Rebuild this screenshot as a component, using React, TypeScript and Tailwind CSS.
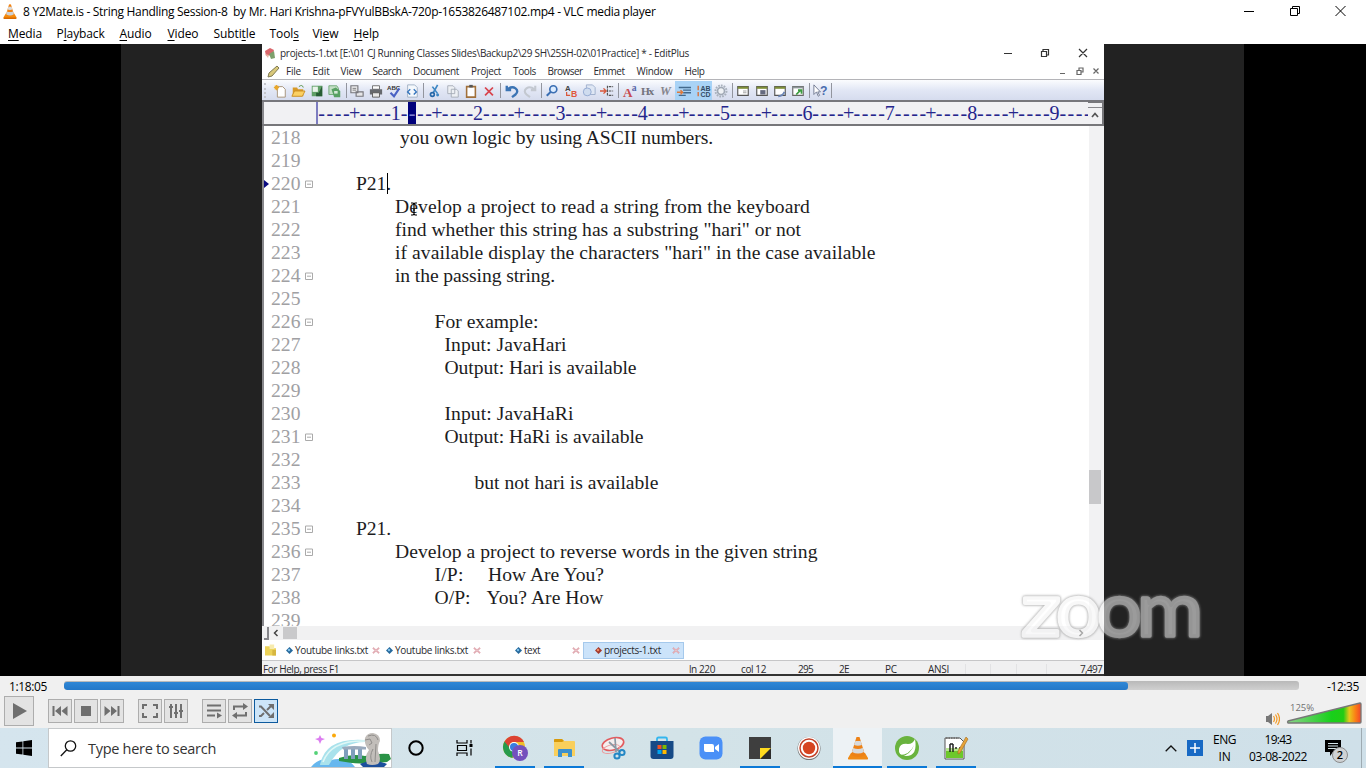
import React, { useLayoutEffect, useRef, useState } from "react";

type FitProps = { w: number; children: string; className?: string };

/* Spreads a label over a fixed width by adjusting its letter spacing. */
function Fit({ w, children, className = "" }: FitProps) {
  const ref = useRef<HTMLSpanElement>(null);
  const [gap, setGap] = useState(0);
  useLayoutEffect(() => {
    if (ref.current) {
      const natural = ref.current.getBoundingClientRect().width;
      setGap((w - natural) / children.length);
    }
  }, [w, children]);
  return (
    <span ref={ref} className={`inline-block shrink-0 whitespace-pre ${className}`} style={{ letterSpacing: `${gap}px` }}>
      {children}
    </span>
  );
}

function Cone({ className = "" }: { className?: string }) {
  return (
    <svg viewBox="0 0 20 22" className={className}>
      <path d="M4 14 L1 19 Q0 21.5 2 21.5 H18 Q20 21.5 19 19 L16 14 Z" fill="#f58a0b" />
      <path d="M1 19.5h18l.3 1.5q-.5.7-1.3.7H2q-1 0-1.3-.7z" fill="#d86a00" />
      <path d="M8.6 1 Q10 0 11.4 1 L15.6 15 Q10 19 4.4 15 Z" fill="#f28210" />
      <path d="M7.7 4.2h4.6l1.1 3.8q-3.4 1.4-6.8 0z" fill="#d9dcdf" />
      <path d="M5.7 11q4.3 1.7 8.6 0l1.2 4q-5.5 3.4-11 0z" fill="#cdd1d5" />
    </svg>
  );
}

const vlcMenu = [
  { l: "Media", k: 0, w: 33, m: 15.5 },
  { l: "Playback", k: 1, w: 47, m: 16 },
  { l: "Audio", k: 0, w: 32, m: 16 },
  { l: "Video", k: 0, w: 30, m: 16 },
  { l: "Subtitle", k: 5, w: 40, m: 16 },
  { l: "Tools", k: 4, w: 27, m: 16 },
  { l: "View", k: 2, w: 25, m: 16 },
  { l: "Help", k: 0, w: 26, m: 0 },
];

const vlcText = "font-['Open_Sans',sans-serif] text-[12px] text-black";

function VlcHeader() {
  return (
    <header className="h-11 shrink-0 bg-white">
      <div className="flex h-[22px] items-center pl-[3px]">
        <Cone className="h-[17px] w-[14px]" />
        <Fit w={632.5} className={`ml-[6px] mt-[2px] ${vlcText}`}>
          8 Y2Mate.is - String Handling Session-8  by Mr. Hari Krishna-pFVYulBBskA-720p-1653826487102.mp4 - VLC media player
        </Fit>
        <svg viewBox="0 0 110 12" className="ml-auto mr-[16px] h-3 w-[110px]" fill="none" stroke="#000" strokeWidth="1">
          <path d="M4 6.500h10M50.500 3.500h7v7h-7zM52.500 3.500v-2h7v7h-2M95.500 1l10 10M105.500 1l-10 10" />
        </svg>
      </div>
      <nav className="flex h-[22px] items-center pl-2 pt-[2px]">
        {vlcMenu.map((m) => (
          <MenuWord key={m.l} {...m} />
        ))}
      </nav>
    </header>
  );
}

function MenuWord({ l, k, w, m }: { l: string; k: number; w: number; m: number }) {
  return (
    <span className={`flex shrink-0 leading-[20px] tracking-[-0.1px] ${vlcText}`} style={{ width: w + m }}>
      <span>{l.slice(0, k)}</span>
      <span className="underline underline-offset-2">{l[k]}</span>
      <span>{l.slice(k + 1)}</span>
    </span>
  );
}

const epMenu: [string, number, number][] = [
  ["File", 15, 11.5], ["Edit", 17, 11], ["View", 21, 11], ["Search", 29, 11.5], ["Document", 46, 12], ["Project", 30, 12],
  ["Tools", 23, 11.5], ["Browser", 35, 11], ["Emmet", 31, 12], ["Window", 36, 12], ["Help", 20, 0],
];

const icons: Record<string, React.ReactNode> = {
  new: <><path d="M5 3h6l3 3v9H5z" fill="#fff" stroke="#a08c70" /><path d="M4 1v6M1 4h6M2 2l4 4M6 2L2 6" stroke="#e8a72c" strokeWidth="1.3" /></>,
  open: <><path d="M2 4h5l1 2h6v8H2z" fill="#d89a28" /><path d="M1 14l3-6h12l-3 6z" fill="#fbd063" stroke="#c88a20" /><path d="M9 3q4-3 5 1" stroke="#4b8a3a" fill="none" /></>,
  save: <><path d="M2 2h12v12H2z" fill="#5f9f66" /><path d="M3 3h6v6H3z" fill="#e8f3ea" /><path d="M14 2v12H7v-4h3z" fill="#275c34" /></>,
  saveall: <><path d="M1 2h9l2 3v7H1z" fill="#c3dfc5" stroke="#6da673" /><path d="M4 6l5-2 5 4v7H7z" fill="#58a163" /><path d="M7 8h4v3H7z" fill="#d5e9d7" /></>,
  ftp: <><path d="M1 2h8v8H1zM7 9h8v5H7z" fill="#e6e6e8" stroke="#77777c" strokeWidth="1.3" /><path d="M3 5h4M3 7h4" stroke="#777" /></>,
  print: <><path d="M4 2h8v4H4z" fill="#fff" stroke="#666" /><path d="M1 6h14v6H1z" fill="#66696e" /><path d="M4 10h8v5H4z" fill="#e9e9e9" stroke="#555" /></>,
  spell: <><text x="0" y="6.500" fontSize="7" fontWeight="700" fill="#333" fontFamily="Liberation Sans">ABC</text><path d="M4 10l4 4 6-9" fill="none" stroke="#4a62c4" strokeWidth="2.400" /></>,
  code: <><path d="M3 1h8l3 3v11H3z" fill="#f4f8fc" stroke="#9badc0" /><path d="M6 6L3 9l3 3M10 6l3 3-3 3" fill="none" stroke="#3474bd" strokeWidth="1.600" /></>,
  cut: <><path d="M11 1L6 10M5 3l6 8" stroke="#3e87c4" strokeWidth="1.900" /><circle cx="5" cy="12" r="2.200" fill="none" stroke="#2667a8" strokeWidth="1.900" /><circle cx="11" cy="12.500" r="1.700" fill="#3e87c4" /></>,
  copy: <path d="M2 2h6l2 2v7H2zM6 6h6l2 2v7H6z" fill="#edf0f4" stroke="#a3aab5" />,
  paste: <><path d="M3 3h10v12H3z" fill="#fdfdfd" stroke="#a1703a" strokeWidth="1.800" /><path d="M6 1h4v3H6z" fill="#555" /></>,
  del: <path d="M3.500 4l9 9M12.500 4l-9 9" stroke="#d8434c" strokeWidth="2" />,
  undo: <path d="M2 2v5h5M3 6q5-4 9-1t0 7l-4 3" fill="none" stroke="#3b74b4" strokeWidth="2.700" />,
  redo: <path d="M14 2v5H9M13 6Q8 2 4 5t0 7l4 3" fill="none" stroke="#c3c8d0" strokeWidth="2.400" />,
  find: <><circle cx="9.500" cy="6" r="4" fill="#dcecff" stroke="#3b6fb3" strokeWidth="1.900" /><path d="M6.500 9L2 13.500" stroke="#3b6fb3" strokeWidth="2.400" /></>,
  replace: <><text x="1" y="8" fontSize="9" fontWeight="700" fill="#444" fontFamily="Liberation Sans">A</text><text x="8" y="15" fontSize="10" fontWeight="700" fill="#e0583c" fontFamily="Liberation Sans">B</text><path d="M3 9v4h4" fill="none" stroke="#d8583c" strokeWidth="1.400" /></>,
  findfiles: <><path d="M5 1h7l3 3v8H5z" fill="#dfe7f4" stroke="#9aabc9" /><circle cx="6" cy="9" r="4.500" fill="#cfdcef" stroke="#8fa6cf" /></>,
  goto: <><path d="M0 8h6M4 5L7 8l-3 3" stroke="#d8583c" fill="none" strokeWidth="1.600" /><path d="M10 3h5M10 8h5M10 13h5M8.500 2v12" stroke="#555" strokeWidth="1.300" strokeDasharray="3 1" /></>,
  font: <><text x="0" y="15" fontSize="15" fontWeight="700" fill="#c74a50" fontFamily="Liberation Serif">A</text><text x="10" y="8" fontSize="11" fontWeight="700" fill="#5966a8" fontFamily="Liberation Serif">a</text></>,
  hx: <text x="0" y="13" fontSize="13" fontWeight="700" fill="#73737c" fontFamily="Liberation Serif" textLength="15">Hx</text>,
  w: <text x="1" y="13" fontSize="14" fontWeight="700" fontStyle="italic" fill="#85858d" fontFamily="Liberation Serif">W</text>,
  wrap: <><path d="M2 4h14M7 7h9M7 10h9M2 13h8" stroke="#436a8d" strokeWidth="1.600" /><path d="M0 9.500h6M4 7l2.500 2.500L4 12" stroke="#e07a3a" fill="none" strokeWidth="1.600" /></>,
  nums: <><text x="5" y="7.500" fontSize="8" fontWeight="700" fill="#334c66" fontFamily="Liberation Sans">AB</text><text x="5" y="15" fontSize="8" fontWeight="700" fill="#334c66" fontFamily="Liberation Sans">CD</text><path d="M2.500 2v5M2.500 9v5" stroke="#d8723c" strokeWidth="1.600" /></>,
  gear: <><circle cx="8" cy="8" r="6.300" fill="none" stroke="#a9b1bc" strokeWidth="2.200" strokeDasharray="2 1.200" /><circle cx="8" cy="8" r="4" fill="#eef1f5" stroke="#a0a9b5" strokeWidth="1.900" /></>,
  win1: <><path d="M2 3h12v10H2z" fill="#fff" stroke="#555" strokeWidth="1.300" /><path d="M2 3h12v2.500H2z" fill="#7e8f3a" /><path d="M8 8h4M8 10h4" stroke="#999" /></>,
  win2: <><path d="M2 3h12v10H2z" fill="#fff" stroke="#555" strokeWidth="1.300" /><path d="M2 3h12v2.500H2z" fill="#7e8f3a" /><path d="M6 7h6v5H6z" fill="#666b80" /></>,
  win3: <><path d="M2 3h12v10H2z" fill="#fff" stroke="#555" strokeWidth="1.300" /><path d="M2 3h12v2.500H2z" fill="#7e8f3a" /><path d="M6 14q5 0 7-5" stroke="#6b85b5" strokeWidth="2" fill="none" /></>,
  win4: <><path d="M2 3h12v10H2z" fill="#fff" stroke="#666" strokeWidth="1.300" /><path d="M2 3h12v2H2z" fill="#8c9699" /><path d="M6 12l5-5M8 7h4v4" stroke="#3a9c3f" strokeWidth="2" fill="none" /></>,
  help: <><path d="M1 1v11l3-3 2 5 1.500-1-2-4h3z" fill="#fff" stroke="#69728c" /><text x="8" y="13" fontSize="14" fontWeight="700" fill="#496caf" fontFamily="Liberation Sans">?</text></>,
};

const toolGroups = [
  ["new", "open", "save", "saveall"],
  ["ftp", "print", "spell", "code"],
  ["cut", "copy", "paste", "del"],
  ["undo", "redo"],
  ["find", "replace", "findfiles", "goto"],
  ["font", "hx", "w", "wrap", "nums", "gear"],
  ["win1", "win2", "win3", "win4"],
  ["help"],
];

function Toolbar() {
  return (
    <div className="flex h-[22px] items-center border-b-2 border-[#77777c] bg-linear-to-b from-[#fbfcfe] via-[#e2e7f5] to-[#d6dcee] pl-[2px]">
      <span className="mr-[5px] h-[15px] w-0 border-l-2 border-dotted border-[#c3c5cc]" />
      {toolGroups.map((g, i) => (
        <div key={i} className="flex items-center">
          {g.map((n) => (
            <span
              key={n}
              className={`flex w-[18.250px] items-center justify-center ${n === "wrap" || n === "nums" ? "h-[19px] bg-[#a9d3f6]" : "h-[18px]"}`}
            >
              <svg viewBox="0 0 16 16" className="mt-px h-[14px] w-[14px] overflow-visible">{icons[n]}</svg>
            </span>
          ))}
          <span className="mx-[1.600px] h-[15px] w-px bg-[#92959e]" />
        </div>
      ))}
    </div>
  );
}

function Ruler() {
  const cells = Array.from({ length: 94 }, (_, i) => (i % 10 === 9 ? String((i + 1) / 10) : i % 10 === 4 ? "+" : "-"));
  return (
    <div className="flex h-6 shrink-0 border-b-2 border-[#77777a] bg-[#f1f1f3]">
      <div className="w-[54px] shrink-0 border-l-2 border-[#88888c]" />
      <div className="flex w-[772px] shrink-0 overflow-hidden border-l-2 border-[#7d7dc0] font-['Liberation_Serif',serif] text-[20px] leading-[22px] text-[#25258c]">
        {cells.map((c, i) => (
          <span key={i} className={`flex w-[8.240px] shrink-0 justify-center ${i === 11 ? "bg-[#00007b] text-[#8080d0]" : ""} ${i === 0 ? "-ml-[0.5px]" : ""}`}>
            {c}
          </span>
        ))}
      </div>
      <div className="flex flex-1 flex-col items-center border-t border-r-2 border-[#77777a]">
        <span className="h-[5px] w-full border-b border-[#88888c]" />
        <svg viewBox="0 0 8 6" className="mt-[4px] h-[6px] w-[8px]"><path d="M1 5l3-3.500L7 5" fill="none" stroke="#555" strokeWidth="1.700" /></svg>
      </div>
    </div>
  );
}

type Line = { n: number; fold?: boolean; parts?: [number, number, string][] };
/* parts: indent from the previous part, width, text */
const lines: Line[] = [
  { n: 218, parts: [[84, 313, "you own logic by using ASCII numbers."]] },
  { n: 219 },
  { n: 220, fold: true, parts: [[40, 35, "P21."]] },
  { n: 221, parts: [[79, 415, "Develop a project to read a string from the keyboard"]] },
  { n: 222, parts: [[79, 406, 'find whether this string has a substring "hari" or not']] },
  { n: 223, parts: [[79, 480.5, 'if available display the characters "hari" in the case available']] },
  { n: 224, fold: true, parts: [[79, 160, "in the passing string."]] },
  { n: 225 },
  { n: 226, fold: true, parts: [[118.5, 104, "For example:"]] },
  { n: 227, parts: [[128.5, 122, "Input: JavaHari"]] },
  { n: 228, parts: [[128.5, 192, "Output: Hari is available"]] },
  { n: 229 },
  { n: 230, parts: [[128.5, 129, "Input: JavaHaRi"]] },
  { n: 231, fold: true, parts: [[128.5, 199, "Output: HaRi is available"]] },
  { n: 232 },
  { n: 233, parts: [[158.5, 184, "but not hari is available"]] },
  { n: 234 },
  { n: 235, fold: true, parts: [[40, 35, "P21."]] },
  { n: 236, fold: true, parts: [[79, 422.5, "Develop a project to reverse words in the given string"]] },
  { n: 237, parts: [[118.5, 29, "I/P:"], [24.5, 116, "How Are You?"]] },
  { n: 238, parts: [[118.5, 36, "O/P:"], [16, 117, "You? Are How"]] },
  { n: 239 },
];

function Editor() {
  return (
    <div className="relative flex h-[500px] shrink-0 bg-white">
      <div className="min-w-0 flex-1 overflow-hidden border-l-2 border-[#88888c] font-['Liberation_Serif',serif] text-[19.600px]">
        {lines.map((l) => (
          <div key={l.n} className="flex h-[23px] items-center leading-[24px] text-[#1c1c22]">
            <span className="flex w-[7px] shrink-0">
              {l.n === 220 && <svg viewBox="0 0 5 8" className="h-2 w-[5px]"><path d="M0 0l5 4-5 4z" fill="#0a0a80" /></svg>}
            </span>
            <Fit w={29.5} className="text-[#a0a0a3]">{String(l.n)}</Fit>
            <span className="flex w-[15px] shrink-0 justify-center">
              {l.fold && <svg viewBox="0 0 8 8" className="ml-px h-2 w-2"><path d="M.5 1h7v6.500h-7zM2 4.200h4" fill="none" stroke="#aaa" /></svg>}
            </span>
            {l.parts?.map(([x, w, t], i) => (
              <span key={i} className="flex shrink-0" style={{ marginLeft: i === 0 ? x + 0.5 : x }}>
                <Fit w={w}>{t}</Fit>
              </span>
            ))}
          </div>
        ))}
      </div>
      <div className="flex w-[15px] shrink-0 flex-col bg-[#f2f2f3] pt-[344px]">
        <span className="h-[34px] w-3 bg-[#c8c8ca]" />
      </div>
      <span className="absolute left-[125px] top-[47px] h-[21px] w-px bg-black" />
      <svg viewBox="0 0 8 14" className="absolute left-[148px] top-[76px] h-[14px] w-2"><path d="M1 1h2l1 1 1-1h2M4 2v10M1 13h2l1-1 1 1h2M3 8h2" fill="none" stroke="#000" strokeWidth="1.200" /></svg>
    </div>
  );
}

const epText = "font-['Open_Sans',sans-serif] text-[10px] leading-[13px] text-[#2a2a2e]";

function Diamond({ red }: { red?: boolean }) {
  return (
    <svg viewBox="0 0 7 7" className="h-[7px] w-[7px] shrink-0">
      <path d="M3.500 0L7 3.500 3.500 7 0 3.500z" fill={red ? "#a33b2e" : "#27699c"} />
      <circle cx="3" cy="3" r="1.200" fill={red ? "#f08a62" : "#7cc0ea"} />
    </svg>
  );
}

function TabClose() {
  return <svg viewBox="0 0 8 8" className="ml-auto h-[7px] w-2 shrink-0"><path d="M.5 1l7 6M7.500 1l-7 6" stroke="#d8909a" strokeWidth="2" /><path d="M1 1l6 6M7 1L1 7" stroke="#fff" strokeWidth=".6" /></svg>;
}

function Tab({ name, w, text, pad, active }: { name: string; w: number; text: number; pad: number; active?: boolean }) {
  return (
    <div
      className={`flex h-[17px] shrink-0 items-center pr-[3px] ${active ? "border border-[#a5c9ec] bg-[#cbe3fa]" : ""}`}
      style={{ width: w, paddingLeft: pad }}
    >
      <Diamond red={active} />
      <Fit w={text} className={`ml-[2px] ${epText}`}>{name}</Fit>
      <TabClose />
    </div>
  );
}

function Status({ w, t, text }: { w: number; t: string; text: number }) {
  return <span className="flex shrink-0" style={{ width: w }}><Fit w={text} className={epText}>{t}</Fit></span>;
}

function EditPlus() {
  return (
    <div className="ml-[141px] flex h-[632px] w-[842px] shrink-0 flex-col border-b-2 border-[#333] bg-white">
      <div className="flex h-[18px] shrink-0 items-center pl-[2px]">
        <svg viewBox="0 0 12 12" className="h-3 w-3"><path d="M1 4l5-3 4 2-2 5-6 1z" fill="#d9666b" /><path d="M5 7l5-3 1 7-4 1z" fill="#7da06c" /><path d="M1 7l4 1-1 3z" fill="#e9b7a8" /></svg>
        <Fit w={409} className={`ml-[4px] ${epText}`}>{"projects-1.txt [E:\\01 CJ Running Classes Slides\\Backup2\\29 SH\\25SH-02\\01Practice] * - EditPlus"}</Fit>
        <svg viewBox="0 0 84 10" className="ml-auto mr-[16px] h-[10px] w-[84px]" fill="none" stroke="#333" strokeWidth="1.200">
          <path d="M0 5.500h8M37.500 3.500h5v5h-5zM39 3v-1.500h5.500V7H43M75 1l8 8M83 1l-8 8" />
        </svg>
      </div>
      <div className="flex h-[17px] shrink-0 items-center pl-[5px] pt-px">
        <svg viewBox="0 0 13 13" className="h-[13px] w-[13px]"><path d="M1 12l1-4L10 1l2 2-7 8z" fill="#d9c87a" stroke="#807a52" /></svg>
        <div className="ml-[6px] flex">
          {epMenu.map(([t, w, m]) => (
            <Status key={t} t={t} w={w + m} text={w} />
          ))}
        </div>
        <svg viewBox="0 0 40 8" className="ml-auto mr-[4px] h-2 w-10" fill="none" stroke="#666" strokeWidth="1.200">
          <path d="M0 6.500h5M17 3.500h4v4h-4zM19 3V1h4v4h-2M33.500 1.500l5 5M38.500 1.500l-5 5" />
        </svg>
      </div>
      <div className="shrink-0 border-t border-[#b4b4b8]"><Toolbar /></div>
      <Ruler />
      <Editor />
      <div className="flex h-[14px] shrink-0 items-center bg-[#f1f1f2] pl-[2px]">
        <span className="h-[13px] w-[5px] border-r-2 border-b-2 border-[#88888c]" />
        <svg viewBox="0 0 6 8" className="ml-[4px] h-2 w-[6px]"><path d="M4.500 1l-3 3 3 3" fill="none" stroke="#444" strokeWidth="1.500" /></svg>
        <span className="ml-[4px] h-3 w-[14px] bg-[#c9c9cb]" />
        <svg viewBox="0 0 6 8" className="ml-auto mr-[20px] h-2 w-[6px]"><path d="M1.500 1l3 3-3 3" fill="none" stroke="#444" strokeWidth="1.500" /></svg>
      </div>
      <div className="flex h-[21px] shrink-0 items-center border-b border-[#c6c6c8] pl-[3px]">
        <svg viewBox="0 0 12 12" className="h-3 w-[11px]"><path d="M0 2h5l1 2h6v8H0z" fill="#ecd258" /><path d="M5 0h5v5H5z" fill="#f7ebae" /><path d="M8 6h4v6H8z" fill="#d6b640" /></svg>
        <div className="ml-[7px] flex">
          <Tab name="Youtube links.txt" w={100} text={73} pad={3} />
          <Tab name="Youtube links.txt" w={101} text={73} pad={3} />
          <Tab name="text" w={99} text={16} pad={31} />
          <Tab name="projects-1.txt" w={101} text={57} pad={11} active />
        </div>
      </div>
      <div className="flex min-h-0 flex-1 items-center overflow-hidden bg-[#f0f0f1] pl-[1px] pt-[3px]">
        <Status t="For Help, press F1" w={426} text={76} />
        <Status t="ln 220" w={52} text={26} />
        <Status t="col 12" w={57} text={25} />
        <Status t="295" w={41} text={15} />
        <Status t="2E" w={46} text={10} />
        <Status t="PC" w={43} text={12} />
        <Status t="ANSI" w={27} text={21} />
        <span className="ml-[10px] h-[11px] w-[26px] border-x border-[#e2e2e4]" />
        <span className="h-[11px] w-[26px] border-r border-[#e2e2e4]" />
        <span className="h-[11px] w-[30px] border-r border-[#e2e2e4]" />
        <span className="ml-auto flex pr-[2px]"><Fit w={22} className={epText}>7,497</Fit></span>
      </div>
    </div>
  );
}

function Watermark() {
  const letters: [string, number, number][] = [["z", 0, 40], ["o", 35, 45], ["o", 76, 45], ["m", 116, 66]];
  return (
    <svg viewBox="0 0 182 60" className="absolute left-[1021px] top-[548px] h-[60px] w-[182px] opacity-55 drop-shadow-[0_0_1px_#8a8a8a]">
      {letters.map(([c, x, w], i) => (
        <text key={i} x={x} y="44" fontSize="76" fontWeight="400" fontFamily="Lato, sans-serif" textLength={w} lengthAdjust="spacingAndGlyphs" fill="#fff" stroke="#f4f4f4" strokeWidth="3.400" strokeLinejoin="round" className="drop-shadow-[0_0_1px_#8a8a8a]">
          {c}
        </text>
      ))}
    </svg>
  );
}

function Ctl({ children, active, gap = "" }: { children: React.ReactNode; active?: boolean; gap?: string }) {
  return (
    <button className={`flex h-6 w-6 shrink-0 items-center justify-center border ${gap} ${active ? "border-[#0c5a9e] bg-[#cde5f8]" : "border-[#adadad] bg-[#e3e3e3]"}`}>
      <svg viewBox="0 0 18 18" className="h-[18px] w-[18px]" fill="#6f6f6f" stroke="none">{children}</svg>
    </button>
  );
}

function Controls() {
  const s = { fill: "none", stroke: "#6f6f6f", strokeWidth: 2 };
  return (
    <section className="flex h-[52px] shrink-0 flex-col bg-[#f0f0f0]">
      <div className="flex h-[18px] items-center pl-[9px] pr-[6px]">
        <Fit w={38} className={`mt-[3px] ${vlcText}`}>1:18:05</Fit>
        <div className="ml-[17px] h-[9px] w-[1235px] overflow-hidden rounded-[3px] bg-linear-to-b from-[#b9b9b9] to-[#d0d0d0]">
          <div className="mt-px h-2 w-[1064px] rounded-[3px] bg-linear-to-b from-[#2f87d6] to-[#2478c8]" />
        </div>
        <span className="ml-auto mt-[3px] flex pr-px"><Fit w={32} className={vlcText}>-12:35</Fit></span>
      </div>
      <div className="flex h-[34px] items-center pl-1">
        <button className="flex h-[30px] w-[30px] items-center justify-center border border-[#adadad] bg-[#e3e3e3]">
          <svg viewBox="0 0 14 16" className="ml-px h-4 w-[14px]"><path d="M0 0l14 8-14 8z" fill="#6f6f6f" /></svg>
        </button>
        <div className="flex gap-[2px] pl-[14px]">
          <Ctl><path d="M1.500 4h2v10h-2zM10 4v10L4 9zM16.500 4v10l-6-5z" /></Ctl>
          <Ctl><path d="M4 4h10v10H4z" /></Ctl>
          <Ctl><path d="M14.500 4h2v10h-2zM8 4v10l6-5zM1.500 4v10l6-5z" /></Ctl>
          <Ctl gap="ml-3"><path d="M6 3H2v4M12 3h4v4M6 15H2v-4M12 15h4v-4" {...s} /></Ctl>
          <Ctl><path d="M4 2v14M9 2v14M14 2v14M2 5h4M7 11h4M12 9h4" {...s} /></Ctl>
          <Ctl gap="ml-3"><path d="M2 3.500h14M2 8.500h14M2 13.500h8" {...s} /><path d="M12 10.500l5 3-5 3z" /></Ctl>
          <Ctl><path d="M3 8V4.500h11M15 10v3.500H4" {...s} /><path d="M12 1l5 3.500L12 8zM6 10l-5 3.500L6 17z" /></Ctl>
          <Ctl active><path d="M2 4.500h2L13 14M2 14h2l3-3M10 8l4-4" {...s} /><path d="M11 2h6v6zM11 16h6v-6z" /></Ctl>
        </div>
        <svg viewBox="0 0 14 14" className="ml-auto mt-[16px] h-[14px] w-[14px]"><path d="M0 4h2l4-3v12l-4-3H0z" fill="#777" /><path d="M7.500 4q2 3 0 6M9.500 2.500q3 4.500 0 9M11.500 1q4 6 0 12" fill="none" stroke="#f39a24" strokeWidth="1.200" /></svg>
        <svg viewBox="0 0 76 26" className="ml-[6px] mr-[4px] mt-[1px] h-[26px] w-[76px]">
          <defs>
            <linearGradient id="vol"><stop stopColor="#8bd28a" /><stop offset=".6" stopColor="#18d01b" /><stop offset=".76" stopColor="#22cc14" /><stop offset=".84" stopColor="#e8c81c" /><stop offset=".93" stopColor="#fb7a16" /><stop offset="1" stopColor="#f0462c" /></linearGradient>
          </defs>
          <path d="M2 22L74 4q1 0 1 1v18q0 1-1 1H2q-1-1 0-2z" fill="url(#vol)" stroke="#777" strokeWidth="1.300" />
          <text x="4" y="12" fontSize="9.500" fill="#707070" fontFamily="Open Sans" textLength="24">125%</text>
        </svg>
      </div>
    </section>
  );
}

function Merlion() {
  return (
    <svg viewBox="0 0 80 38" className="h-[38px] w-20 self-end">
      <path d="M0 38q8-10 20-7 16-4 24 7z" fill="#66b7ee" />
      <path d="M28 29q14-5 26-2 14-3 24-2l2 5-4 3q-24 4-48-1z" fill="#2a9347" />
      <path d="M9 36Q14 8 54 11v2Q30 13 18 36z" fill="#a9e2ec" />
      <path d="M12 33Q20 11 54 12" fill="none" stroke="#dff7f6" strokeWidth="1.500" />
      <path d="M33 20h4v10h-4zM40 20h4v10h-4zM47 20h4v10h-4z" fill="#7f9fbd" />
      <path d="M31 18q13-2 24 0v2.500H32z" fill="#9aaabd" />
      <path d="M49 35q13-6 27 0l-3 3H52z" fill="#1c4f9c" />
      <path d="M56 35q-3-8 2-14-5-5-4-12 2-5 8-5 7 1 7 8-2 3-2 10 4 9 0 13-6 2-11 0z" fill="#c2beba" />
      <path d="M54 11l5-1 2 4-3 2M62 20q-4 7-1 13M65 15l-1 18M57 7q8-3 10 4" fill="none" stroke="#8f8d8b" strokeWidth="1" />
      <path d="M9 6l1.500 3 3.500 1-3.500 1.500L9 15l-1.500-3.500L4 10l3.500-1z" fill="#dc7df0" />
      <circle cx="23" cy="6.500" r="2" fill="#fba90a" /><circle cx="5" cy="24" r="1.900" fill="#53d277" />
    </svg>
  );
}

const tray = "font-['Open_Sans',sans-serif] text-[12px] text-black";

function TaskApp({ children, open, active, size = 24 }: { children: React.ReactNode; open?: boolean; active?: boolean; size?: number }) {
  return (
    <div className={`flex h-10 w-[49px] shrink-0 flex-col items-center ${active ? "bg-[#edf2f5]" : ""}`}>
      <div className="flex flex-1 items-center pt-[2px]">
        <svg viewBox="0 0 24 24" className="overflow-visible" style={{ width: size, height: size }}>{children}</svg>
      </div>
      <span className={`h-[2px] ${active ? "w-full" : "w-10"} ${open ? "bg-[#0b79d7]" : ""}`} />
    </div>
  );
}

function Taskbar() {
  return (
    <footer className="flex h-10 shrink-0 items-center bg-linear-to-r from-[#d5e5ee] via-[#d3e3e8] to-[#cfe0e9]">
      <div className="flex w-12 shrink-0 justify-center">
        <svg viewBox="0 0 16 16" className="h-4 w-4"><path d="M0 2.300L6.500 1.400V7.600H0zM7.300 1.300L16 0v7.600H7.300zM0 8.400h6.500v6.200L0 13.700zM7.300 8.400H16V16l-8.700-1.300z" /></svg>
      </div>
      <div className="flex h-10 w-[344px] shrink-0 items-center border border-[#c5c8ca] bg-white pl-[11px]">
        <svg viewBox="0 0 17 17" className="h-[17px] w-[17px]" fill="none" stroke="#111" strokeWidth="1.300"><circle cx="10.500" cy="6" r="5.200" /><path d="M6.800 9.700L.8 16" /></svg>
        <Fit w={128} className="ml-[11px] mt-px font-['Open_Sans',sans-serif] text-[14.500px] text-[#333]">Type here to search</Fit>
        <span className="ml-auto flex self-end"><Merlion /></span>
      </div>
      <div className="flex w-12 shrink-0 justify-center"><svg viewBox="0 0 16 16" className="h-4 w-4"><circle cx="8" cy="8" r="6.700" fill="none" stroke="#000" strokeWidth="2" /></svg></div>
      <div className="flex w-[49px] shrink-0 justify-center"><svg viewBox="0 0 17 16" className="h-4 w-[17px]" fill="none" stroke="#000" strokeWidth="1.200"><path d="M1 0v3h10V0M1.500 5.500h9v5h-9zM1 16v-3h10v3M15 0v3.500M15 8.500v7" /><path d="M13.500 4h3v3h-3z" fill="#000" stroke="none" /></svg></div>
      <span className="w-px shrink-0" />
      <TaskApp open size={24}>
        <circle cx="11" cy="11" r="11" fill="#f0bd29" /><path d="M11 11L1.500 5.500A11 11 0 0 0 9.500 22z" fill="#279b4c" /><path d="M1.500 5.500A11 11 0 0 1 21 6H11a5 5 0 0 0-5 5z" fill="#dc4333" />
        <circle cx="11" cy="11" r="5" fill="#fff" /><circle cx="11" cy="11" r="4" fill="#387de0" /><circle cx="17" cy="17" r="8" fill="#7450bd" />
        <text x="17" y="20" fontSize="8.500" fontWeight="600" fill="#fff" textAnchor="middle" fontFamily="Open Sans">R</text>
      </TaskApp>
      <TaskApp open>
        <path d="M2 4q0-1 1-1h7l2 2h10q1 0 1 1v14H2z" fill="#f9cf5c" /><path d="M2 6V4q0-1 1-1h7l2 2-2 1z" fill="#d7990b" /><path d="M6 21v-7q0-1 1-1h12q1 0 1 1v7h-4v-4h-6v4z" fill="#3d91ce" />
      </TaskApp>
      <TaskApp>
        <ellipse cx="12" cy="8" rx="11" ry="6" fill="#f5eeee" stroke="#e25b5e" strokeWidth="1.600" transform="rotate(-15 12 8)" /><ellipse cx="10" cy="13" rx="9" ry="4" fill="none" stroke="#eb9b9c" transform="rotate(-15 10 13)" />
        <path d="M14 2l1 14M8 6l11 10" stroke="#8b98a3" strokeWidth="1.700" /><circle cx="16" cy="20" r="2.600" fill="none" stroke="#2387c5" strokeWidth="2" /><circle cx="21" cy="16.500" r="2.600" fill="none" stroke="#2387c5" strokeWidth="2" />
      </TaskApp>
      <TaskApp>
        <path d="M7 6V3q0-1.500 1.500-1.500h7Q17 1.500 17 3v3" fill="none" stroke="#34b6ee" strokeWidth="1.800" /><path d="M.5 5h23v15q0 3-3 3h-17q-3 0-3-3z" fill="#174a86" />
        <path d="M7.500 9h4v4h-4z" fill="#f25022" /><path d="M12.500 9h4v4h-4z" fill="#7fba00" /><path d="M7.500 14h4v4h-4z" fill="#00a4ef" /><path d="M12.500 14h4v4h-4z" fill="#ffb900" />
      </TaskApp>
      <TaskApp>
        <rect x=".5" y=".5" width="23" height="23" rx="6" fill="#4a90f7" /><path d="M5 8h8q2 0 2 2v6H7q-2 0-2-2zM16 11l4-3v8l-4-3z" fill="#fff" />
      </TaskApp>
      <TaskApp open>
        <path d="M1 1h22v22H1z" fill="#3e3e3e" /><path d="M12 12h11v11H12z" fill="#2c2c2c" /><path d="M12 12h11L12 23z" fill="#ffdb1f" />
      </TaskApp>
      <TaskApp>
        <circle cx="12" cy="12.500" r="11.500" fill="#777" /><circle cx="12" cy="12" r="11" fill="#fff" /><circle cx="12" cy="12" r="9" fill="none" stroke="#c4432a" strokeWidth="1.500" /><circle cx="12" cy="12" r="6.200" fill="#d64420" />
      </TaskApp>
      <TaskApp open active>
        <path d="M5 17l-3 5q-.5 1.500 1 1.500h18q1.500 0 1-1.500l-3-5z" fill="#f08a16" /><path d="M10.500 1h3L19 19q-7 4-14 0z" fill="#ed8217" /><path d="M9.400 5h5.200l1.300 4q-4 1.500-7.800 0zM7.200 12q4.800 2 9.600 0l1.200 4q-6 3-12 0z" fill="#d8dadc" />
      </TaskApp>
      <TaskApp open>
        <circle cx="12" cy="12" r="12" fill="#69b33e" /><path d="M20 3q3 17-9 17-8 0-7-7Q5 7 13 8q5 0 7-5z" fill="#fff" /><path d="M4 19q11 0 15-10-3 9-13 12z" fill="#69b33e" />
      </TaskApp>
      <TaskApp open>
        <path d="M1 2h15l4 4v17H1z" fill="#fff" stroke="#555" /><path d="M2 12h17v10H2z" fill="#6dc82b" /><path d="M2 12h17v3H2z" fill="#b8e68f" /><path d="M6 8v8M9 8v8M6 8h3M11 12h2M15 12h2" stroke="#222" strokeWidth="1.500" fill="none" /><path d="M2 2h13" stroke="#777" strokeWidth="2" strokeDasharray="1.500 1" /><path d="M22 1l2 2-8 14-2 1v-3z" fill="#e7a438" stroke="#9f6a22" strokeWidth=".6" />
      </TaskApp>
      <div className="ml-auto flex h-10 items-center">
        <svg viewBox="0 0 12 7" className="h-[7px] w-3"><path d="M.7 6.300L6 1l5.300 5.300" fill="none" stroke="#111" strokeWidth="1.300" /></svg>
        <span className="ml-[10px] flex h-4 w-4 items-center justify-center bg-[#1769c4]"><svg viewBox="0 0 10 10" className="h-[10px] w-[10px]"><path d="M5 0v10M0 5h10" stroke="#fff" strokeWidth="1.500" /></svg></span>
        <div className={`ml-[10px] flex w-[23px] flex-col items-center leading-[17px] ${tray}`}><Fit w={23}>ENG</Fit><Fit w={12}>IN</Fit></div>
        <div className={`ml-[13px] flex w-[58px] flex-col items-center leading-[17px] ${tray}`}><Fit w={27}>19:43</Fit><Fit w={58}>03-08-2022</Fit></div>
        <div className="relative ml-[18px] h-[26px] w-[24px]">
          <svg viewBox="0 0 16 16" className="mt-[5px] h-4 w-4"><path d="M0 0h16v12H8l-3 4v-4H0z" /><path d="M3 3.500h10M3 6h10M3 8.500h10" stroke="#d3e3e8" /></svg>
          <span className="absolute left-[7px] top-[12px] flex h-4 w-4 items-center justify-center rounded-full border border-[#8c8c8c] bg-[#cfd2d4] font-['Open_Sans',sans-serif] text-[11px] font-semibold">2</span>
        </div>
        <span className="ml-[12px] mr-1 h-10 w-px bg-[#9eabb2]" />
      </div>
    </footer>
  );
}

export default function App() {
  return (
    <div className="flex h-[768px] w-[1366px] flex-col overflow-hidden bg-[#f0f0f0]">
      <VlcHeader />
      <main className="relative flex h-[632px] shrink-0 bg-black px-[121px]">
        <div className="flex w-[1123px] bg-[#222222]"><EditPlus /></div>
        <Watermark />
      </main>
      <Controls />
      <Taskbar />
    </div>
  );
}
